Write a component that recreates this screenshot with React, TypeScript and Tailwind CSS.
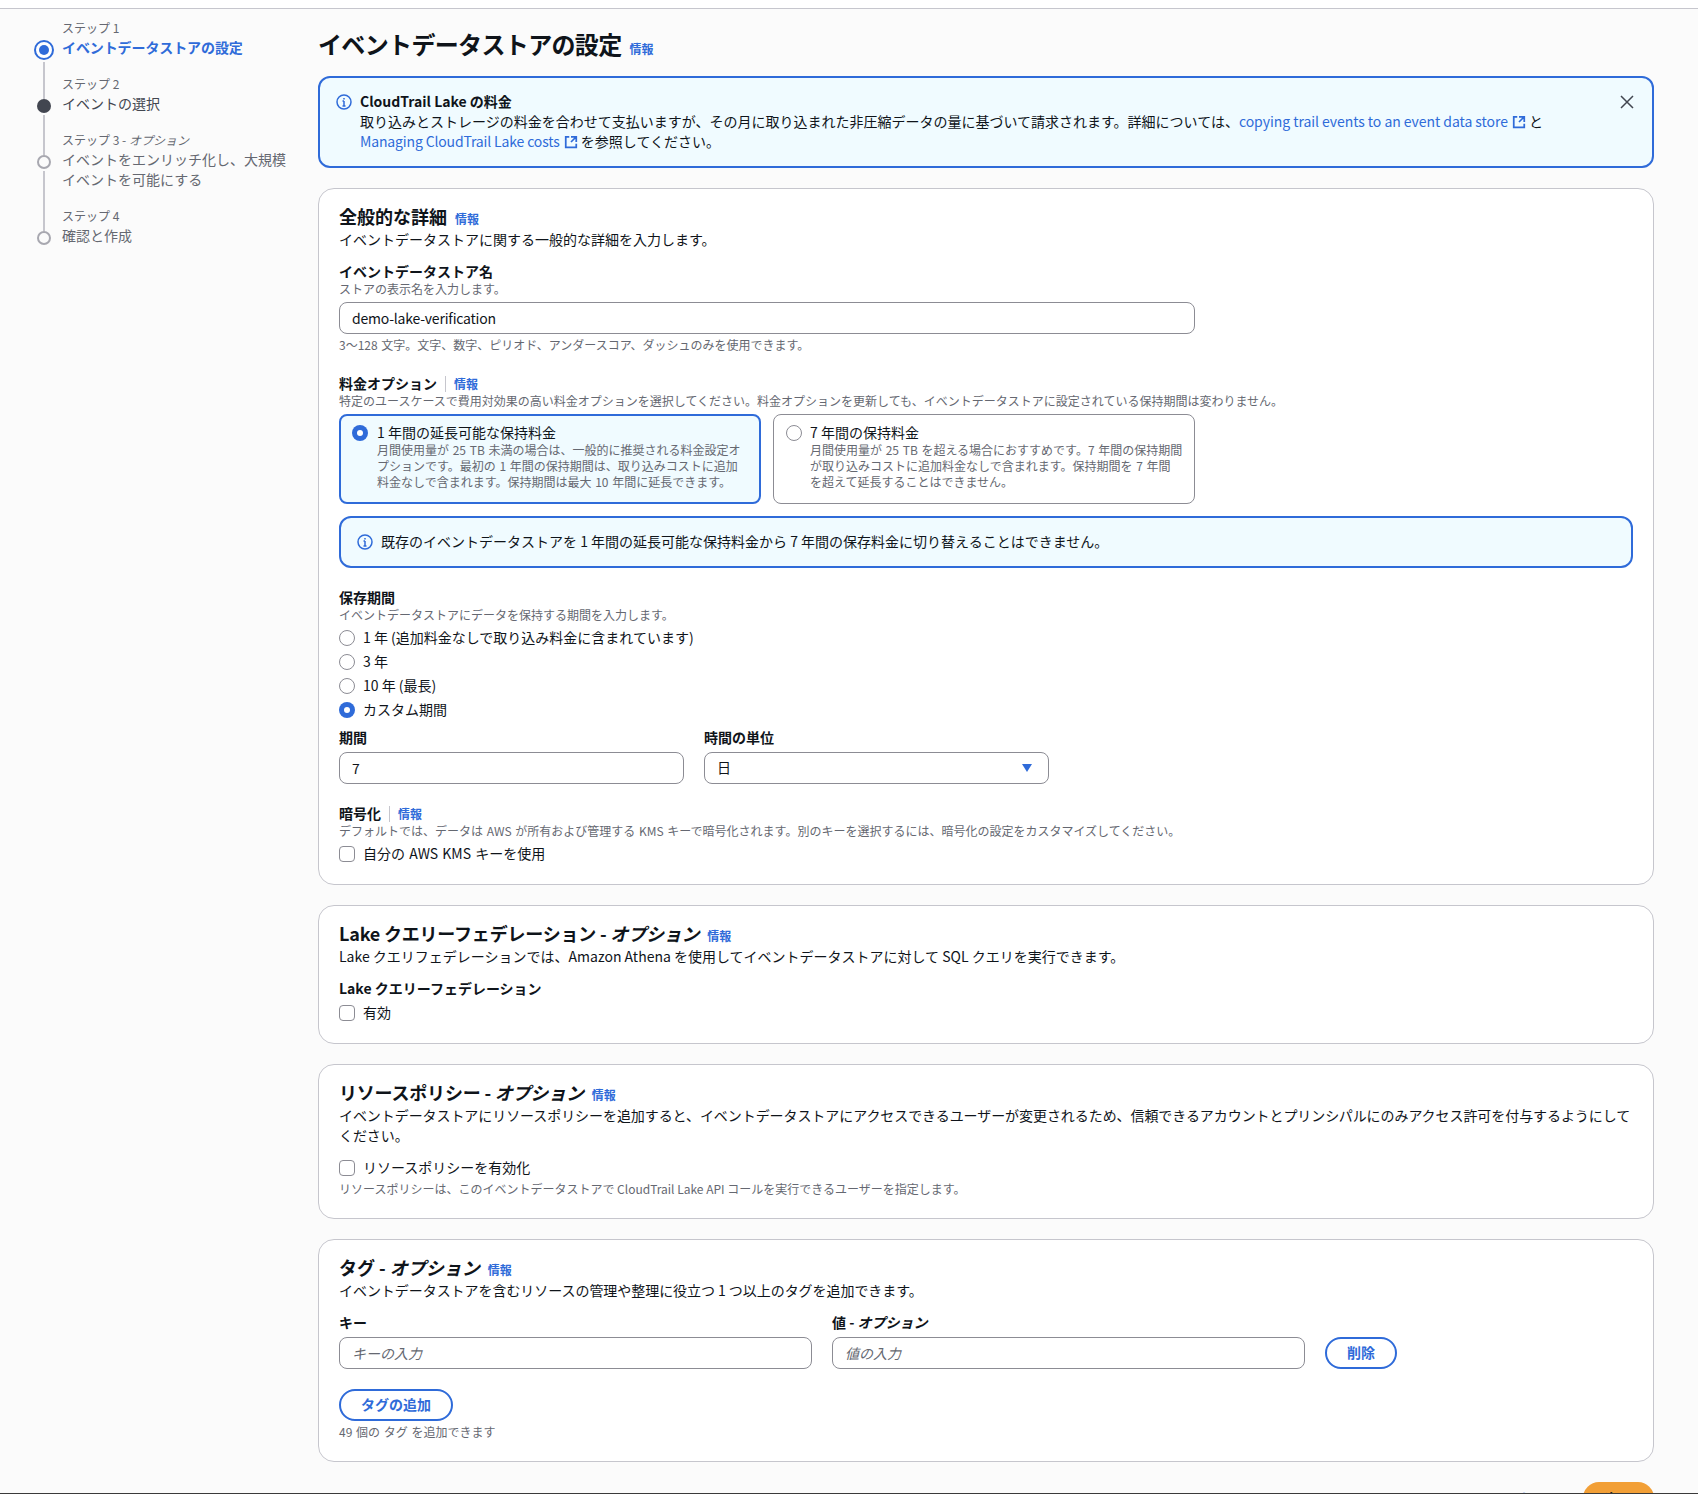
import React from "react";

const Info = ({ className = "" }: { className?: string }) => (
  <a className={`text-[12px] leading-[14px] font-bold tracking-normal text-[#2f6bd9] ${className}`}>情報</a>
);

const InfoIcon = () => (
  <svg viewBox="0 0 16 16" className="w-4 h-4 shrink-0" fill="none" stroke="#2f6bd9" strokeWidth="1.5">
    <circle cx="8" cy="8" r="7" />
    <path d="M8 12V7M6.5 7H8M6.5 12h3M8 5.5V4" />
  </svg>
);

const Ext = () => (
  <svg viewBox="0 0 16 16" className="inline-block w-[14px] h-[14px] ml-1 align-[-2px]" fill="none" stroke="#2f6bd9" strokeWidth="2">
    <path d="M14 8V2H8M14 2 8 8M6 2H2v12h12v-4" />
  </svg>
);

const Radio = ({ on = false }: { on?: boolean }) =>
  on ? (
    <span className="w-4 h-4 rounded-full bg-[#2f6bd9] flex items-center justify-center shrink-0">
      <span className="w-[6px] h-[6px] rounded-full bg-white" />
    </span>
  ) : (
    <span className="w-4 h-4 rounded-full border border-[#8c8c94] bg-white shrink-0" />
  );

const RadioRow = ({ on, children }: { on?: boolean; children: React.ReactNode }) => (
  <div className="flex items-center gap-2 h-6 text-[14px] text-[#0f141a]">
    <Radio on={on} />
    <span className="-mt-[2px]">{children}</span>
  </div>
);

const CheckRow = ({ className = "", children }: { className?: string; children: React.ReactNode }) => (
  <div className={`flex items-center gap-2 h-6 text-[14px] text-[#0f141a] ${className}`}>
    <span className="w-4 h-4 rounded-[4px] border border-[#8c8c94] bg-white shrink-0" />
    <span className="-mt-[2px]">{children}</span>
  </div>
);

const Label = ({ className = "", children }: { className?: string; children: React.ReactNode }) => (
  <div className={`text-[14px] leading-[18px] pb-[2px] font-bold text-[#0f141a] ${className}`}>{children}</div>
);

const Desc = ({ className = "", children }: { className?: string; children: React.ReactNode }) => (
  <div className={`text-[12px] leading-[14px] text-[#656871] ${className}`}>{children}</div>
);

const Sep = () => <span className="w-px h-4 bg-[#c6c6cd] mx-2" />;

const Card = ({ className = "", children }: { className?: string; children: React.ReactNode }) => (
  <section className={`rounded-2xl border border-[#c6c6cd] bg-white pl-5 pr-5 pt-4 ${className}`}>{children}</section>
);

const CardTitle = ({ className = "", children }: { className?: string; children: React.ReactNode }) => (
  <div className="flex items-baseline gap-2 text-[18px] leading-[22px] pb-[2px] font-bold text-[#0f141a]">
    <h2 className={className}>{children}</h2>
    <Info />
  </div>
);

const inputCls =
  "h-8 rounded-lg border border-[#8c8c94] bg-white px-3 text-[14px] text-[#0f141a] outline-none placeholder:italic placeholder:text-[#656871]";

const Step = ({
  label,
  title,
  circle,
  topLine,
  bottomLine,
  titleCls,
  h,
}: {
  label: React.ReactNode;
  title: React.ReactNode;
  circle: React.ReactNode;
  topLine: string;
  bottomLine: boolean;
  titleCls: string;
  h: string;
}) => (
  <div className={`flex ${h}`}>
    <div className="w-5 flex flex-col items-center">
      <div className={`w-[2px] ${topLine}`} />
      {circle}
      {bottomLine && <div className="w-[2px] flex-1 mt-[2px] bg-[#c6c6cd]" />}
    </div>
    <div className="pl-2 flex-1">
      <div className="text-[12px] leading-4 text-[#656871]">{label}</div>
      <div className={`mt-[1px] text-[14px] leading-5 ${titleCls}`}>{title}</div>
    </div>
  </div>
);

const Hollow = () => <span className="w-[14px] h-[14px] rounded-full border-2 border-[#a8a8b0] shrink-0" />;

export default function App() {
  return (
    <div
      className="h-[1494px] overflow-hidden border-b border-[#3a3a3a] bg-[#fbfbfb] text-[#0f141a]"
      style={{ fontFamily: '"Noto Sans CJK JP", "Noto Sans", sans-serif' }}
    >
      <div className="h-[9px] border-b border-[#c6c6cd] bg-white" />
      <div className="flex">
        <aside className="w-[318px] shrink-0 pl-[34px] pt-[11px]">
          <Step
            h="h-[56px]"
            label="ステップ 1"
            title="イベントデータストアの設定"
            titleCls="font-bold text-[#2f6bd9] tracking-[-0.1px]"
            topLine="h-5"
            bottomLine
            circle={
              <span className="w-5 h-5 rounded-full border-2 border-[#2f6bd9] bg-white flex items-center justify-center shrink-0">
                <span className="w-[10px] h-[10px] rounded-full bg-[#2f6bd9]" />
              </span>
            }
          />
          <Step
            h="h-[56px]"
            label="ステップ 2"
            title="イベントの選択"
            titleCls="text-[#424650]"
            topLine="h-[23px] bg-[#c6c6cd]"
            bottomLine
            circle={<span className="w-[14px] h-[14px] rounded-full bg-[#424650] shrink-0" />}
          />
          <Step
            h="h-[76px]"
            label={
              <>
                ステップ 3 - <span className="italic">オプション</span>
              </>
            }
            title={
              <>
                イベントをエンリッチ化し、大規模
                <br />
                イベントを可能にする
              </>
            }
            titleCls="text-[#656871]"
            topLine="h-[23px] bg-[#c6c6cd]"
            bottomLine
            circle={<Hollow />}
          />
          <Step
            h="h-[40px]"
            label="ステップ 4"
            title="確認と作成"
            titleCls="text-[#656871]"
            topLine="h-[23px] bg-[#c6c6cd]"
            bottomLine={false}
            circle={<Hollow />}
          />
        </aside>

        <main className="w-[1336px] shrink-0 pt-5">
          <div className="flex items-baseline gap-2 h-[30px]">
            <h1 className="text-[24px] leading-[30px] font-bold tracking-[-0.65px]">イベントデータストアの設定</h1>
            <Info />
          </div>

          <div className="mt-[17px] relative h-[92px] rounded-xl border-2 border-[#2f6bd9] bg-[#f0fbff] pl-4 pt-[13px] flex gap-2 text-[14px] leading-5">
            <div className="h-5 mt-px flex items-center">
              <InfoIcon />
            </div>
            <div>
              <div className="font-bold">CloudTrail Lake の料金</div>
              <div>
                取り込みとストレージの料金を合わせて支払いますが、その月に取り込まれた非圧縮データの量に基づいて請求されます。詳細については、
                <a className="text-[#2f6bd9] tracking-[-0.05px]">
                  copying trail events to an event data store
                  <Ext />
                </a>{" "}
                と
                <br />
                <a className="text-[#2f6bd9] tracking-[-0.15px]">
                  Managing CloudTrail Lake costs
                  <Ext />
                </a>{" "}
                を参照してください。
              </div>
            </div>
            <svg viewBox="0 0 16 16" className="absolute right-[17px] top-[16px] w-4 h-4" fill="none" stroke="#424650" strokeWidth="1.5">
              <path d="M2 2l12 12M14 2 2 14" />
            </svg>
          </div>

          <Card className="mt-5 pb-[18px]">
            <CardTitle>全般的な詳細</CardTitle>
            <div className="text-[14px] leading-5">イベントデータストアに関する一般的な詳細を入力します。</div>
            <Label className="mt-[13px]">イベントデータストア名</Label>
            <Desc>ストアの表示名を入力します。</Desc>
            <input className={`${inputCls} mt-[6px] w-[856px] block tracking-[-0.2px]`} readOnly value="demo-lake-verification" />
            <div className="mt-[3px] pb-px text-[12px] leading-4 text-[#656871] [word-spacing:1px]">3～128 文字。文字、数字、ピリオド、アンダースコア、ダッシュのみを使用できます。</div>

            <div className="mt-5 flex items-center h-5">
              <Label>料金オプション</Label>
              <Sep />
              <Info />
            </div>
            <Desc>特定のユースケースで費用対効果の高い料金オプションを選択してください。料金オプションを更新しても、イベントデータストアに設定されている保持期間は変わりません。</Desc>

            <div className="mt-[6px] flex gap-3 w-[856px]">
              <div className="w-[422px] h-[90px] rounded-lg border-2 border-[#2f6bd9] bg-[#f0fbff] pl-[11px] pt-[7px] flex gap-[9px]">
                <div className="h-5 flex items-center">
                  <Radio on />
                </div>
                <div>
                  <div className="text-[14px] leading-5 -mt-px">1 年間の延長可能な保持料金</div>
                  <div className="text-[12px] leading-4 text-[#656871] [word-spacing:1px]">
                    月間使用量が 25 TB 未満の場合は、一般的に推奨される料金設定オ
                    <br />
                    プションです。最初の 1 年間の保持期間は、取り込みコストに追加
                    <br />
                    料金なしで含まれます。保持期間は最大 10 年間に延長できます。
                  </div>
                </div>
              </div>
              <div className="w-[422px] h-[90px] rounded-lg border border-[#8c8c94] bg-white pl-3 pt-2 flex gap-2">
                <div className="h-5 flex items-center">
                  <Radio />
                </div>
                <div>
                  <div className="text-[14px] leading-5 -mt-px">7 年間の保持料金</div>
                  <div className="text-[12px] leading-4 text-[#656871] [word-spacing:1px]">
                    月間使用量が 25 TB を超える場合におすすめです。7 年間の保持期間
                    <br />
                    が取り込みコストに追加料金なしで含まれます。保持期間を 7 年間
                    <br />
                    を超えて延長することはできません。
                  </div>
                </div>
              </div>
            </div>

            <div className="mt-3 h-[52px] rounded-xl border-2 border-[#2f6bd9] bg-[#f0fbff] pl-4 flex items-center gap-2 text-[14px]">
              <InfoIcon />
              <span className="-mt-[2px]">既存のイベントデータストアを 1 年間の延長可能な保持料金から 7 年間の保存料金に切り替えることはできません。</span>
            </div>

            <Label className="mt-5">保存期間</Label>
            <Desc>イベントデータストアにデータを保持する期間を入力します。</Desc>
            <div className="mt-1">
              <RadioRow>1 年 (追加料金なしで取り込み料金に含まれています)</RadioRow>
              <RadioRow>3 年</RadioRow>
              <RadioRow>10 年 (最長)</RadioRow>
              <RadioRow on>カスタム期間</RadioRow>
            </div>

            <div className="mt-[6px] flex gap-5">
              <div className="w-[345px]">
                <Label>期間</Label>
                <input className={`${inputCls} mt-1 w-full block`} readOnly value="7" />
              </div>
              <div className="w-[345px]">
                <Label>時間の単位</Label>
                <div className={`${inputCls} mt-1 w-full flex items-center justify-between pr-4`}>
                  <span className="-mt-[2px]">日</span>
                  <svg viewBox="0 0 10 8" className="w-[10px] h-2" fill="#2f6bd9">
                    <path d="M0 0h10L5 8z" />
                  </svg>
                </div>
              </div>
            </div>

            <div className="mt-5 flex items-center h-5">
              <Label>暗号化</Label>
              <Sep />
              <Info />
            </div>
            <Desc className="[word-spacing:1px]">デフォルトでは、データは AWS が所有および管理する KMS キーで暗号化されます。別のキーを選択するには、暗号化の設定をカスタマイズしてください。</Desc>
            <CheckRow className="mt-1 [word-spacing:1px]">自分の AWS KMS キーを使用</CheckRow>
          </Card>

          <Card className="mt-5 pb-[18px]">
            <CardTitle className="tracking-[-0.2px]">
              Lake クエリーフェデレーション - <span className="italic">オプション</span>
            </CardTitle>
            <div className="text-[14px] leading-[19px] pb-[1px] mt-px">Lake クエリフェデレーションでは、Amazon Athena を使用してイベントデータストアに対して SQL クエリを実行できます。</div>
            <Label className="mt-3">Lake クエリーフェデレーション</Label>
            <CheckRow className="mt-[2px]">有効</CheckRow>
          </Card>

          <Card className="mt-5 pb-[22px]">
            <CardTitle className="tracking-[-0.2px]">
              リソースポリシー - <span className="italic">オプション</span>
            </CardTitle>
            <div className="text-[14px] leading-5 mt-px -translate-y-px tracking-[-0.07px] whitespace-nowrap">
              イベントデータストアにリソースポリシーを追加すると、イベントデータストアにアクセスできるユーザーが変更されるため、信頼できるアカウントとプリンシパルにのみアクセス許可を付与するようにして
              <br />
              ください。
            </div>
            <CheckRow className="mt-[10px]">リソースポリシーを有効化</CheckRow>
            <Desc className="mt-[2px]">リソースポリシーは、このイベントデータストアで CloudTrail Lake API コールを実行できるユーザーを指定します。</Desc>
          </Card>

          <Card className="mt-5 pb-[22px]">
            <CardTitle>
              タグ - <span className="italic">オプション</span>
            </CardTitle>
            <div className="text-[14px] leading-5 tracking-[-0.05px]">イベントデータストアを含むリソースの管理や整理に役立つ 1 つ以上のタグを追加できます。</div>
            <div className="mt-[13px] flex items-end gap-5">
              <div className="w-[473px]">
                <Label>キー</Label>
                <input className={`${inputCls} mt-1 w-full block`} placeholder="キーの入力" />
              </div>
              <div className="w-[473px]">
                <Label>
                  値 - <span className="italic">オプション</span>
                </Label>
                <input className={`${inputCls} mt-1 w-full block`} placeholder="値の入力" />
              </div>
              <button className="w-[72px] h-8 rounded-full border-2 border-[#2f6bd9] text-[14px] font-bold text-[#2f6bd9] leading-[18px] pb-[2px]">削除</button>
            </div>
            <button className="mt-5 block w-[114px] h-8 rounded-full border-2 border-[#2f6bd9] text-[14px] font-bold text-[#2f6bd9] leading-[18px] pb-[2px]">タグの追加</button>
            <Desc className="mt-1 [word-spacing:1px]">49 個の タグ を追加できます</Desc>
          </Card>

          <div className="mt-5 flex items-center justify-end gap-[36px]">
            <a className="text-[14px] font-bold text-[#2f6bd9]">キャンセル</a>
            <button className="w-[71px] h-8 rounded-full bg-[#f29f36] text-[14px] font-bold text-[#0f141a]">次へ</button>
          </div>
        </main>
      </div>
    </div>
  );
}
